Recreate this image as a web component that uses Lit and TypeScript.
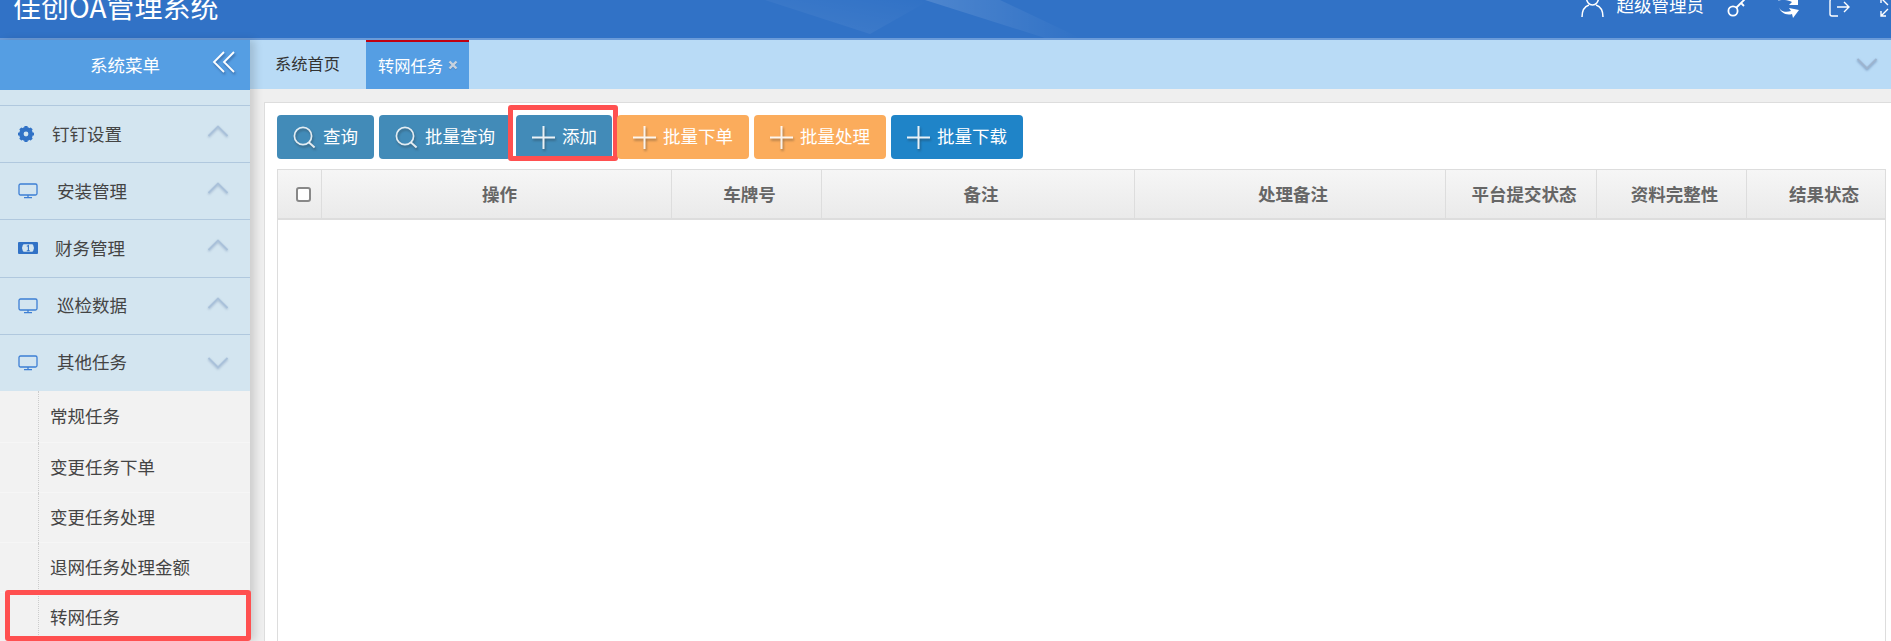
import { LitElement, html, css, svg } from "lit";
import { customElement } from "lit/decorators.js";

const monitor = svg`<svg class="mi" viewBox="0 0 20 16" width="20" height="16"><rect x="1" y="1" width="18" height="11" rx="1.5" fill="none" stroke="#3d7fd4" stroke-width="1.3"/><path d="M10 12v2.4M6 14.6h8" stroke="#3d7fd4" stroke-width="1.3" fill="none"/></svg>`;
const gear = svg`<svg class="mi" viewBox="0 0 20 16" width="20" height="16"><g transform="translate(8 8)"><circle r="5.2" fill="none" stroke="#3172c6" stroke-width="3.4"/><g fill="#3172c6"><rect x="-1.6" y="-8" width="3.2" height="16" rx=".6"/><rect x="-1.6" y="-8" width="3.2" height="16" rx=".6" transform="rotate(45)"/><rect x="-1.6" y="-8" width="3.2" height="16" rx=".6" transform="rotate(90)"/><rect x="-1.6" y="-8" width="3.2" height="16" rx=".6" transform="rotate(135)"/></g><circle r="2.4" fill="#d3e5f0"/></g></svg>`;
const money = svg`<svg class="mi" viewBox="0 0 20 16" width="20" height="16"><rect x="0" y="2" width="20" height="12" rx="1" fill="#3172c6"/><path d="M3 4.2h14a2 2 0 0 0 1 1.6v4.4a2 2 0 0 0-1 1.6H3a2 2 0 0 0-1-1.6V5.8a2 2 0 0 0 1-1.6z" fill="#d3e5f0"/><path d="M2 2h5.4Q4 5 4 8t3.4 6H2zM18 2h-5.4Q16 5 16 8t-3.4 6H18z" fill="#3172c6"/><path d="M8.8 6.4l1.6-1v5.4M8.8 10.8h3" stroke="#3172c6" stroke-width="1.1" fill="none"/></svg>`;
const chev = (up: boolean) => svg`<svg class="chev ${up ? "" : "dn"}" viewBox="0 0 22 14" width="22" height="14"><path d="${up ? "M1.5 12L11 2.5 20.5 12" : "M1.5 2L11 11.5 20.5 2"}" fill="none" stroke="#a9c1da" stroke-width="1.8"/></svg>`;
const search = svg`<svg class="bi" viewBox="0 0 23 23" width="23" height="23"><circle cx="10" cy="10" r="8.6" fill="none" stroke="#fff" stroke-width="1.7" opacity=".85"/><path d="M16 16.4l5.6 5" stroke="#fff" stroke-width="2" opacity=".85"/></svg>`;
const plus = svg`<svg class="bi" viewBox="0 0 23 23" width="23" height="23"><path d="M0 11.5h23M11.5 0v23" stroke="#fff" stroke-width="2" opacity=".9"/></svg>`;

const menus: [unknown, string, number, boolean][] = [
  [gear, "钉钉设置", 14, true],
  [monitor, "安装管理", 19, true],
  [money, "财务管理", 17, true],
  [monitor, "巡检数据", 19, true],
  [monitor, "其他任务", 19, false],
];
const subs = ["常规任务", "变更任务下单", "变更任务处理", "退网任务处理金额", "转网任务"];
const cols = ["操作", "车牌号", "备注", "处理备注", "平台提交状态", "资料完整性", "结果状态"];
const buttons: [unknown, string, string, boolean][] = [
  [search, "查询", "teal", false],
  [search, "批量查询", "teal", false],
  [plus, "添加", "teal", true],
  [plus, "批量下单", "orange", false],
  [plus, "批量处理", "orange", false],
  [plus, "批量下载", "blue", false],
];

@customElement("app-root")
export class AppRoot extends LitElement {
  static styles = css`
    :host { display: flex; flex-direction: column; height: 641px; overflow: hidden; background: #efefef; color: #444;
      font-family: "Noto Sans CJK SC", "Liberation Sans", sans-serif; font-size: 17.5px; }
    .top { position: relative; flex: none; height: 38px; border-bottom: 2px solid #6b9bd8; background: #3172c6; display: flex;
      align-items: flex-end; justify-content: space-between; overflow: hidden; color: #fff; }
    .glow { position: absolute; left: 700px; top: 0; }
    .title { position: relative; font-size: 28px; line-height: 28px; padding: 0 0 18px 13px; white-space: nowrap; }
    .tools { position: relative; display: flex; align-items: flex-end; height: 38px; padding-bottom: 21px; box-sizing: border-box; margin-right: -10px; }
    .tools svg { display: block; flex: none; }
    .uname { line-height: 22px; margin: 0 23px 0 13px; white-space: nowrap; position: relative; top: -1px; }
    .tools .t { margin-right: 30px; }
    .main { flex: 1; display: flex; min-height: 0; }
    .side { flex: none; width: 250px; background: #f2f2f2; display: flex; flex-direction: column; box-shadow: 5px 0 8px rgba(0,0,0,.14); position: relative; z-index: 2; }
    .side-head { height: 50px; flex: none; background: #559ee3; color: #fff; display: flex; align-items: center; justify-content: center; position: relative; padding-bottom: 2px; box-sizing: border-box; }
    .collapse { position: absolute; right: 14px; top: 11px; filter: drop-shadow(1px 2px 1px rgba(30,60,110,.5)); }
    .gap { height: 15px; flex: none; background: #d3e5f0; }
    .m { height: 56.2px; flex: none; border-top: 1px solid #b0c8de; background: #d3e5f0; display: flex; align-items: center; padding-left: 18px; position: relative; }
    .m span { position: relative; top: -1px; }
    .mi { display: block; flex: none; }
    .chev { position: absolute; right: 21px; top: 18px; filter: drop-shadow(0 1px 1px rgba(60,90,140,.3)); }
    .chev.dn { top: 21px; }
    .s { height: 49px; flex: none; border-bottom: 1px solid #f6f6f6; background: #f2f2f2; padding-left: 50px; line-height: 48px; position: relative; }
    .s:first-of-type { height: 51px; line-height: 50px; }
    .s::before { content: ""; position: absolute; left: 38px; top: 0; bottom: -1px; border-left: 1px dotted #ccc; }
    .s.cur::after { content: ""; position: absolute; left: 5px; right: -1px; top: -3px; height: 41px; border: 5px solid #ff5050; border-radius: 3px; }
    .right { flex: 1; min-width: 0; display: flex; flex-direction: column; }
    .tabs { flex: none; height: 49px; background: #b9dbf6; display: flex; align-items: stretch; position: relative; padding-left: 25px; font-size: 16.25px; }
    .tab { display: flex; align-items: center; color: #333; margin-right: 26px; padding-bottom: 3px; }
    .tab.on { background: #559ee3; border-top: 2px solid #c00010; color: #fff; width: 103px; margin: 0; padding: 0 0 2px 12px; box-sizing: border-box; gap: 5px; }
    .x { flex: none; display: block; filter: drop-shadow(0 1px 0 rgba(60,90,140,.3)); }
    .tabs .down { position: absolute; right: 13px; top: 17px; filter: drop-shadow(0 1px 1px rgba(60,90,140,.5)); }
    .panel { flex: 1; min-height: 0; margin: 13px 0 0 14px; background: #fff; border: 1px solid #ddd; border-width: 1px 0 0 1px; padding: 12px 0 0 12px; display: flex; flex-direction: column; }
    .bar { flex: none; height: 44px; display: flex; gap: 5px; }
    .b { position: relative; display: flex; align-items: center; gap: 7px; padding: 0 16px; border-radius: 4px; color: #fff; white-space: nowrap; }
    .b span { position: relative; top: -2px; }
    .b svg { filter: drop-shadow(1px 2px 1px rgba(40,40,40,.45)); }
    .teal { background: #428bb8; } .orange { background: #fbac5c; } .blue { background: #1f84c8; }
    .b.mark { padding-right: 15px; }
    .b.mark::after { content: ""; position: absolute; left: -8px; right: -6px; top: -10px; height: 46px; border: 5px solid #ff5050; border-radius: 3px; }
    .tbl { flex: 1; min-height: 0; width: 1607px; margin-top: 10px; border: 1px solid #ddd; border-width: 1px 1px 0 1px; }
    .head { display: grid; grid-template-columns: 44px 350px 150px 313px 311px 151px 150px 138px; height: 48px; border-bottom: 2px solid #ddd; background: linear-gradient(#f6f6f6, #eaeaea); }
    .th { display: flex; align-items: center; justify-content: center; padding: 0 0 2px 6px; border-right: 1px solid #ddd; font-weight: 700; color: #666; white-space: nowrap; min-width: 0; box-sizing: border-box; }
    .th:last-child { border-right: 0; padding-left: 16px; }
    .th.ck { padding: 0 0 0 7px; }
    .box { width: 11px; height: 11px; border: 2px solid #888; border-radius: 3px; background: #fff; }
  `;
  render() {
    return html`
      <div class="top">
        <svg class="glow" width="500" height="38" viewBox="0 0 500 38">
          <defs>
            <linearGradient id="g" x1="0" y1="1" x2="1" y2="0"><stop offset="0.1" stop-color="#fff" stop-opacity=".07"/><stop offset="1" stop-color="#fff" stop-opacity="0"/></linearGradient>
            <linearGradient id="h" x1="0" y1="0" x2="1" y2="0"><stop offset="0" stop-color="#fff" stop-opacity=".14"/><stop offset="1" stop-color="#fff" stop-opacity="0"/></linearGradient>
          </defs>
          <polygon points="65,0 170,34 230,0" fill="url(#g)"/>
          <polygon points="225,0 345,38 380,38 300,0" fill="url(#h)"/>
        </svg>
        <div class="title">佳创OA管理系统</div>
        <div class="tools">
          <svg width="23" height="26" viewBox="0 0 23 26" fill="none" stroke="#fff" stroke-width="1.5"><ellipse cx="11.5" cy="7" rx="6" ry="7"/><path d="M1 26c0-8 4-11 7-12M22 26c0-8-4-11-7-12"/></svg>
          <span class="uname">超级管理员</span>
          <svg class="t" width="21" height="17" viewBox="0 0 21 17" fill="none" stroke="#fff" stroke-width="1.8"><circle cx="6" cy="11" r="4.6"/><path d="M9.5 7.5L18 -1M14 3l3 3"/></svg>
          <svg class="t" width="21" height="22" viewBox="0 0 21 22" fill="#fff" style="margin-bottom:-1px"><path d="M0 5c4-6 11-7 17-3l3-3v10h-9l3-3C10 4 4 3 0 5zM1 11c1 4 6 6 12 4l-2-3 10 2-6 8-1-4C8 20 2 16 1 11z"/></svg>
          <svg class="t" width="21" height="17" viewBox="0 0 21 17" fill="none" stroke="#fff" stroke-width="1.4"><path d="M8 -1H3a2 2 0 0 0-2 2v13a2 2 0 0 0 2 2h6M8 7h12M15 2l5 5-5 5"/></svg>
          <svg width="21" height="20" viewBox="0 0 21 20" fill="none" stroke="#fff" stroke-width="1.4"><path d="M8 8L1 1M1 6V1h5M8 12l-7 7M1 14v5h5"/></svg>
        </div>
      </div>
      <div class="main">
        <div class="side">
          <div class="side-head">系统菜单
            <svg class="collapse" width="24" height="22" viewBox="0 0 24 22" fill="none" stroke="#fff" stroke-width="1.8"><path d="M12 1L2 11l10 10M22 1L12 11l10 10"/></svg>
          </div>
          <div class="gap"></div>
          ${menus.map(([ic, t, g, up]) => html`<div class="m">${ic}<span style="margin-left:${g}px">${t}</span>${chev(up)}</div>`)}
          <div class="subs">
            ${subs.map((t, i) => html`<div class="s ${i === 4 ? "cur" : ""}">${t}</div>`)}
          </div>
        </div>
        <div class="right">
          <div class="tabs">
            <div class="tab">系统首页</div>
            <div class="tab on">转网任务<svg class="x" width="10" height="10" viewBox="0 0 10 10"><path d="M1.5 1.5l7 7M8.5 1.5l-7 7" stroke="#c8d2de" stroke-width="2.4"/></svg></div>
            <svg class="down" width="22" height="14" viewBox="0 0 22 14" fill="none" stroke="#9db4cf" stroke-width="1.8"><path d="M1.5 2L11 11.5 20.5 2"/></svg>
          </div>
          <div class="panel">
            <div class="bar">
              ${buttons.map(([ic, t, c, mark]) => html`<div class="b ${c} ${mark ? "mark" : ""}">${ic}<span>${t}</span></div>`)}
            </div>
            <div class="tbl">
              <div class="head">
                <div class="th ck"><div class="box"></div></div>
                ${cols.map((c) => html`<div class="th">${c}</div>`)}
              </div>
            </div>
          </div>
        </div>
      </div>
    `;
  }
}
